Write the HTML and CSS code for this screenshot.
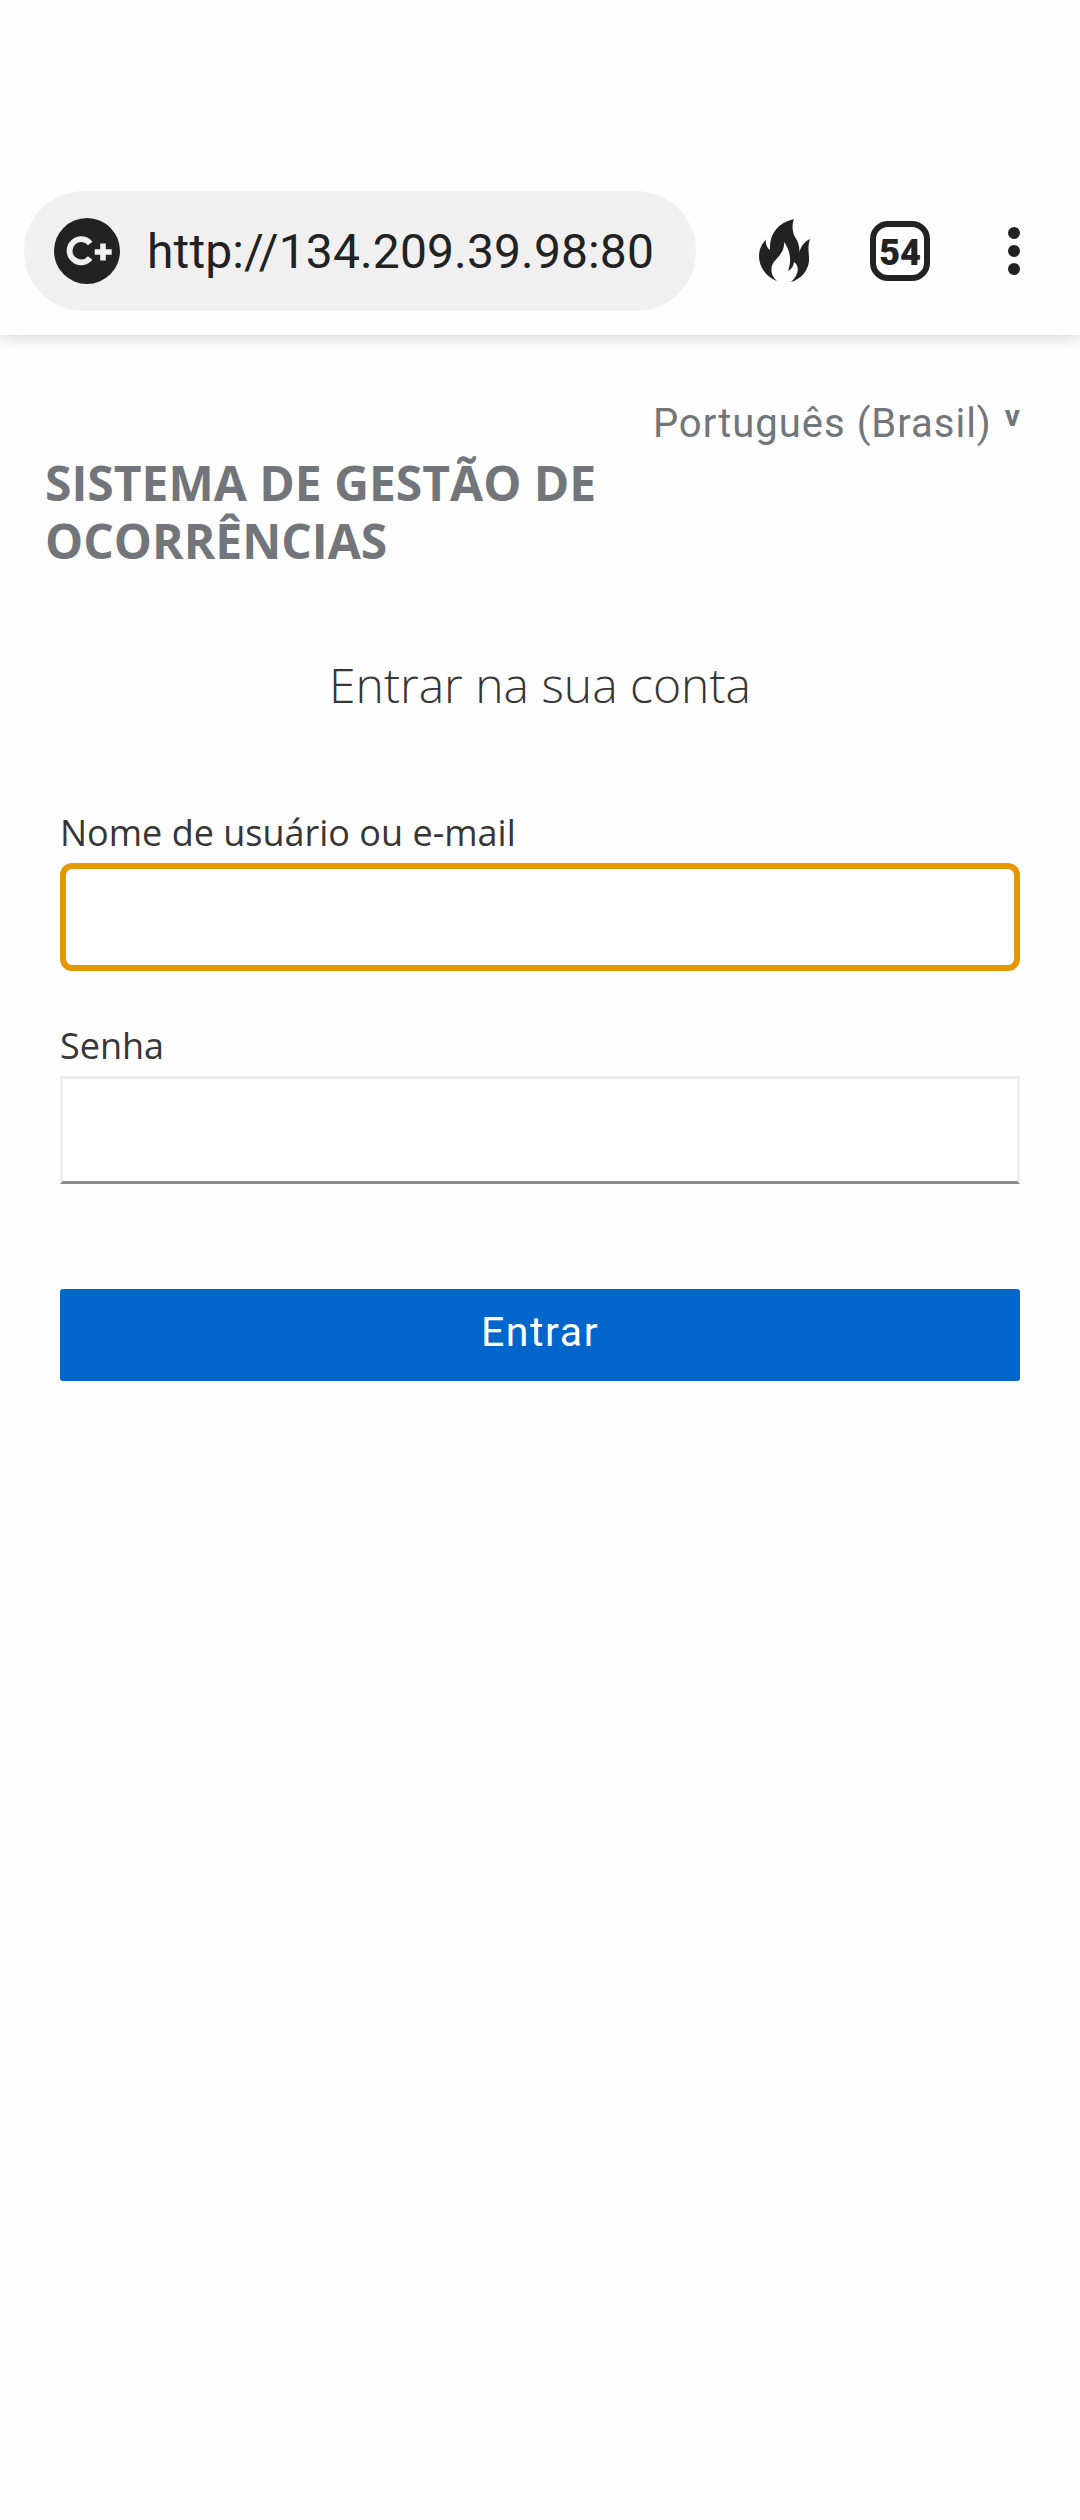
FILE: index.html
```html
<!DOCTYPE html>
<html lang="pt-BR">
<head>
<meta charset="utf-8">
<title>Entrar</title>
<link rel="stylesheet" href="styles.css">
</head>
<body>
<header class="toolbar">
  <div class="address">
    <svg class="site-icon" viewBox="0 0 66 66" width="66" height="66" aria-hidden="true">
      <circle cx="33" cy="33" r="33" fill="#222"/>
      <path d="M36.2 25.5A11.6 11.6 0 1 0 36.2 40" fill="none" stroke="#f0f0f0" stroke-width="5.8"/>
      <path d="M49 25.5v17M40.7 34h17" fill="none" stroke="#f0f0f0" stroke-width="5.6"/>
    </svg>
    <span class="url">http://134.209.39.98:80</span>
  </div>
  <svg class="fire" viewBox="0 0 52 64" width="52" height="64" aria-hidden="true">
    <path fill="#222" d="M35 0C32.500 7 33.500 13 36 18C39 22 40.500 27 40.500 33C42 27 46 22 51 20C48 29 50.500 35 50 42C49 52 42 60 32 63C40 56 41 47 35 43C34.500 47 32.500 50.500 29 52C33 41 31 31 25 23C26 37 12.500 40 12.500 50C12 55 15 60 18 62C7 58 0 48 0 37Q0 28 7 20.500C6 25 8 29 11 31C10 16 18 4 35 0Z"/>
  </svg>
  <div class="tabs">54</div>
  <div class="menu"><i></i><i></i><i></i></div>
</header>
<main class="login">
  <div class="locale"><span>Português (Brasil)</span><span class="caret">v</span></div>
  <div class="brand">SISTEMA DE GESTÃO DE OCORRÊNCIAS</div>
  <h1 class="heading">Entrar na sua conta</h1>
  <form class="form">
    <label class="label" for="username">Nome de usuário ou e-mail</label>
    <input class="field field-focused" id="username" type="text">
    <label class="label" for="password">Senha</label>
    <input class="field" id="password" type="password">
    <button class="submit" type="button">Entrar</button>
  </form>
</main>
</body>
</html>
```
FILE: styles.css
```css
* { box-sizing: border-box; }
body {
  margin: 0;
  min-height: 2520px;
  background: #fefefe;
  color: #363636;
  font-family: "Open Sans", sans-serif;
}
.toolbar {
  display: flex;
  align-items: center;
  height: 335px;
  padding: 167px 60px 0 24px;
  background: #fefefe;
  box-shadow: 0 0 18px rgba(0, 0, 0, .22);
  font-family: Roboto, sans-serif;
  color: #222;
}
.address {
  display: flex;
  align-items: center;
  width: 672px;
  height: 120px;
  padding-left: 30px;
  border-radius: 60px;
  background: #f0f0f0;
}
.url {
  margin: 2px 0 0 27px;
  font-size: 48px;
  line-height: 60px;
  letter-spacing: .13px;
  white-space: nowrap;
}
.fire { margin-left: 63px; }
.tabs {
  width: 60px;
  height: 60px;
  margin-left: 59px;
  border: 6px solid #222;
  border-radius: 18px;
  font-size: 36px;
  font-weight: 900;
  line-height: 52px;
  text-align: center;
}
.menu {
  display: flex;
  flex-direction: column;
  gap: 6px;
  margin-left: 78px;
}
.menu i {
  width: 12px;
  height: 12px;
  border-radius: 50%;
  background: #222;
}
.login { padding: 60px 60px 0; }
.locale {
  display: flex;
  justify-content: flex-end;
  height: 59px;
  font-family: Roboto, sans-serif;
  font-size: 40px;
  line-height: 58px;
  letter-spacing: 1px;
  color: #72767b;
}
.caret {
  margin-left: 13px;
  font-size: 30px;
  font-weight: 700;
  line-height: 41px;
  letter-spacing: 0;
}
.brand {
  width: 600px;
  margin-left: -15px;
  font-size: 48px;
  font-weight: 700;
  line-height: 58px;
  color: #72767b;
}
.heading {
  margin: 83px 0 0;
  font-size: 48px;
  font-weight: 300;
  line-height: 64px;
  text-align: center;
}
.form {
  display: flex;
  flex-direction: column;
  margin-top: 89px;
}
.label {
  font-size: 36px;
  line-height: 54px;
}
.field {
  width: 100%;
  height: 108px;
  margin: 3px 0 48px;
  border: 3px solid #ededed;
  border-bottom-color: #8a8d90;
  border-radius: 0;
  background: #fff;
  font-size: 48px;
  outline: none;
}
.field-focused {
  border: 6px solid #e59700;
  border-radius: 12px;
}
.submit {
  height: 92px;
  margin-top: 57px;
  padding: 0 0 6px;
  border: 0;
  border-radius: 3px;
  background: #06c;
  color: #fff;
  font-family: Roboto, sans-serif;
  font-size: 41px;
  line-height: 60px;
  letter-spacing: 1.6px;
}
```
